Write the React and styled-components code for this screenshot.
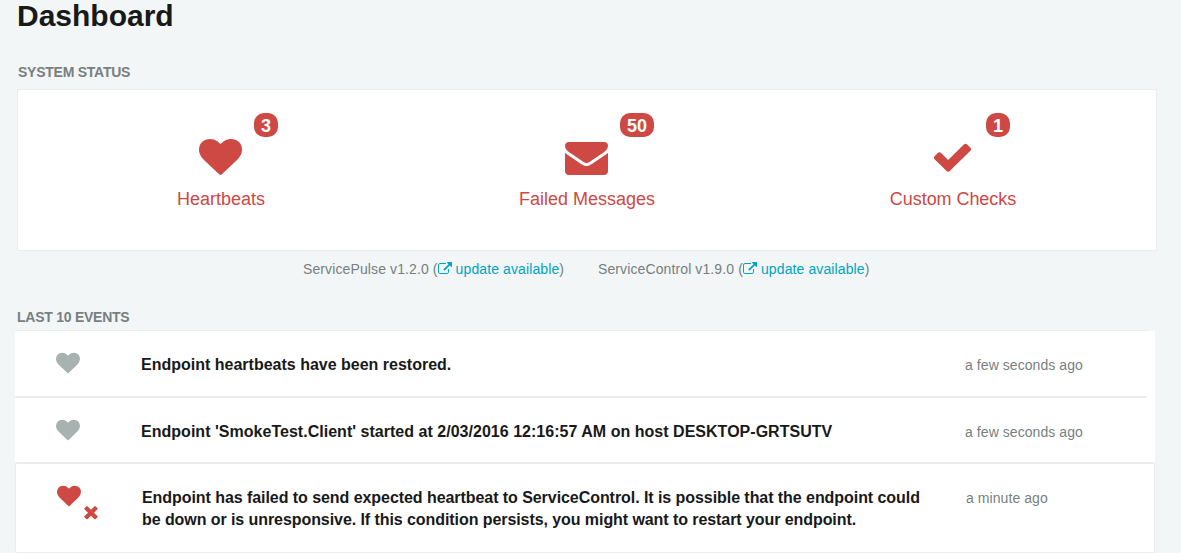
import React from 'react';
import styled, { createGlobalStyle } from 'styled-components';

const red = '#ce4844';
const grey = '#777f7f';

const GlobalStyle = createGlobalStyle`
  *, *::before, *::after { box-sizing: border-box; }
  body {
    margin: 0;
    background: #f2f6f7;
    color: #181919;
    font-family: Arial, "Liberation Sans", sans-serif;
    font-size: 14px;
    overflow: hidden;
  }
`;

const Page = styled.main`
  width: 1181px;
  height: 553px;
  overflow: hidden;
  padding: 0 24px 0 15px;
`;

const Title = styled.h1`
  margin: 0;
  padding-left: 2px;
  height: 32px;
  font-size: 30px;
  line-height: 32px;
`;

const SectionTitle = styled.h6`
  margin: ${(p) => p.$top}px 0 0;
  padding-left: ${(p) => p.$indent}px;
  height: 16px;
  font-size: 14px;
  line-height: 16px;
  letter-spacing: ${(p) => p.$spacing}px;
  color: ${grey};
  text-transform: uppercase;
  white-space: nowrap;
`;

const StatusPanel = styled.section`
  display: grid;
  grid-template-columns: repeat(3, 1fr);
  width: 1140px;
  height: 162px;
  margin: 9px 0 0 2px;
  padding: 0 20px;
  background: #fff;
  border: 1px solid #ebeded;
  border-radius: 2px;
`;

const StatusItem = styled.a`
  display: flex;
  flex-direction: column;
  align-items: center;
  padding-top: 46px;
  color: ${red};
`;

const IconHolder = styled.span`
  position: relative;
  display: block;
  width: 43px;
  height: 42px;
  margin-right: 1px;
`;

const Badge = styled.span`
  position: absolute;
  left: 55px;
  top: -23px;
  height: 24px;
  padding: 0 7px;
  border-radius: 10px;
  background: ${red};
  color: #fff;
  font-size: 18px;
  font-weight: bold;
  line-height: 26px;
`;

const StatusLabel = styled.span`
  margin-top: 10px;
  font-size: 18px;
  line-height: 22px;
  letter-spacing: ${(p) => p.$spacing || 0}px;
  white-space: nowrap;
`;

const Icon = styled.svg`
  display: block;
  flex: none;
  width: ${(p) => p.$width}px;
  height: ${(p) => p.$height}px;
  fill: ${(p) => p.$color || 'currentColor'};
`;

const Versions = styled.div`
  display: flex;
  gap: 34px;
  height: 18px;
  margin: 9px 0 0 288px;
  color: ${grey};
  line-height: 18px;
  letter-spacing: 0.11px;
`;

const Version = styled.span`
  display: flex;
  width: ${(p) => p.$width}px;
  white-space: nowrap;
`;

const UpdateLink = styled.a`
  display: flex;
  align-items: flex-start;
  gap: 4px;
  color: #00a3c4;

  svg { margin-top: 2px; }
`;

const EventList = styled.section`
  display: flex;
  flex-direction: column;
  width: 1140px;
  margin-top: 5px;
`;

const EventRow = styled.article`
  display: grid;
  grid-template-columns: 126px 824px 1fr;
  height: ${(p) => p.$height}px;
  background: #fff;
  border: ${(p) => (p.$boxed ? '1px solid #ebeded' : 'none')};
  border-radius: ${(p) => (p.$boxed ? 2 : 0)}px;
`;

const Divider = styled.div`
  width: ${(p) => p.$width}px;
  height: ${(p) => p.$height}px;
  background: #eceeee;
`;

const DividerTrack = styled.div`
  background: ${(p) => p.$background};
`;

const EventIcon = styled.div`
  position: relative;
  padding: ${(p) => p.$top}px 0 0 41px;
`;

const FailMark = styled.span`
  position: absolute;
  left: 65px;
  top: 38px;
`;

const EventText = styled.p`
  margin: 0;
  padding-top: 23px;
  font-size: 16px;
  font-weight: bold;
  line-height: 22px;
  white-space: nowrap;
`;

const TextLine = styled.span`
  display: block;
  letter-spacing: ${(p) => p.$spacing || 0}px;
`;

const EventTime = styled.time`
  padding-top: 25px;
  color: ${grey};
  line-height: 18px;
  letter-spacing: 0.07px;
  white-space: nowrap;
`;

const paths = {
  heart:
    'M896 1664q-26 0-44-18l-624-602q-10-8-27.5-26t-55.5-65.5-68-97.5-53.5-121-23.5-138q0-220 127-344t351-124q62 0 126.5 21.5t120 58 95.5 68.5 76 68q36-36 76-68t95.5-68.5 120-58 126.5-21.5q224 0 351 124t127 344q0 221-229 450l-623 600q-18 18-44 18z',
  envelope:
    'M1792 710v794q0 66-47 113t-113 47h-1472q-66 0-113-47t-47-113v-794q44 49 101 87 362 246 497 345 57 42 92.5 65.5t94.5 48 110 24.5h2q51 0 110-24.5t94.5-48 92.5-65.5q170-123 498-345 57-39 100-87zm0-294q0 79-49 151t-122 123q-376 261-468 325-10 7-42.5 31t-54 38.5-52 32.5-57.5 27-50 9h-2q-23 0-50-9t-57.5-27-52-32.5-54-38.5-42.5-31q-91-64-262-182.5t-205-142.5q-62-42-117-115.5t-55-136.5q0-78 41.5-130t118.5-52h1472q65 0 112.5 47t47.5 113z',
  check:
    'M1671 566q0 40-28 68l-724 724-136 136q-28 28-68 28t-68-28l-136-136-362-362q-28-28-28-68t28-68l136-136q28-28 68-28t68 28l294 295 656-657q28-28 68-28t68 28l136 136q28 28 28 68z',
  times:
    'M1490 1322q0 40-28 68l-136 136q-28 28-68 28t-68-28l-294-294-294 294q-28 28-68 28t-68-28l-136-136q-28-28-28-68t28-68l294-294-294-294q-28-28-28-68t28-68l136-136q28-28 68-28t68 28l294 294 294-294q28-28 68-28t68 28l136 136q28 28 28 68t-28 68l-294 294 294 294q28 28 28 68z',
  external:
    'M1408 928v320q0 119-84.5 203.5t-203.5 84.5h-832q-119 0-203.5-84.5t-84.5-203.5v-832q0-119 84.5-203.5t203.5-84.5h704q14 0 23 9t9 23v64q0 14-9 23t-23 9h-704q-66 0-113 47t-47 113v832q0 66 47 113t113 47h832q66 0 113-47t47-113v-320q0-14 9-23t23-9h64q14 0 23 9t9 23zm384-864v512q0 26-19 45t-45 19-45-19l-176-176-652 652q-10 10-23 10t-23-10l-114-114q-10-10-10-23t10-23l652-652-176-176q-19-19-19-45t19-45 45-19h512q26 0 45 19t19 45z',
};

function Glyph({ name, width, height = width, color }) {
  return (
    <Icon
      viewBox="0 0 1792 1792"
      preserveAspectRatio="none"
      $width={width}
      $height={height}
      $color={color}
      aria-hidden="true"
    >
      <path d={paths[name]} />
    </Icon>
  );
}

const statuses = [
  { icon: 'heart', count: 3, label: 'Heartbeats' },
  { icon: 'envelope', count: 50, label: 'Failed Messages' },
  { icon: 'check', count: 1, label: 'Custom Checks', spacing: -0.06 },
];

const versions = [
  { name: 'ServicePulse v1.2.0', width: 261 },
  { name: 'ServiceControl v1.9.0', width: 273 },
];

export default function App() {
  return (
    <>
      <GlobalStyle />
      <Page>
        <Title>Dashboard</Title>
        <SectionTitle $top={32} $indent={3} $spacing={-0.25}>System status</SectionTitle>
        <StatusPanel>
          {statuses.map((s) => (
            <StatusItem key={s.label}>
              <IconHolder>
                <Glyph name={s.icon} width={43} height={42} />
                <Badge>{s.count}</Badge>
              </IconHolder>
              <StatusLabel $spacing={s.spacing}>{s.label}</StatusLabel>
            </StatusItem>
          ))}
        </StatusPanel>
        <Versions>
          {versions.map((v) => (
            <Version key={v.name} $width={v.width}>
              {v.name}&nbsp;(
              <UpdateLink>
                <Glyph name="external" width={14} />
                update available
              </UpdateLink>
              )
            </Version>
          ))}
        </Versions>
        <SectionTitle $top={31} $indent={2} $spacing={-0.25}>Last 10 events</SectionTitle>
        <EventList>
          <Divider $width={1132} $height={1} />
          <EventRow $height={65}>
            <EventIcon $top={20}><Glyph name="heart" width={24} color="#a8b3b1" /></EventIcon>
            <EventText><TextLine>Endpoint heartbeats have been restored.</TextLine></EventText>
            <EventTime>a few seconds ago</EventTime>
          </EventRow>
          <DividerTrack $background="#fff"><Divider $width={1132} $height={2} /></DividerTrack>
          <EventRow $height={64}>
            <EventIcon $top={20}><Glyph name="heart" width={24} color="#a8b3b1" /></EventIcon>
            <EventText>
              <TextLine $spacing={0.024}>Endpoint 'SmokeTest.Client' started at 2/03/2016 12:16:57 AM on host DESKTOP-GRTSUTV</TextLine>
            </EventText>
            <EventTime>a few seconds ago</EventTime>
          </EventRow>
          <DividerTrack $background="#f2f4f4"><Divider $width={1140} $height={1} /></DividerTrack>
          <EventRow $height={90} $boxed>
            <EventIcon $top={20}>
              <Glyph name="heart" width={24} color={red} />
              <FailMark><Glyph name="times" width={20} color={red} /></FailMark>
            </EventIcon>
            <EventText>
              <TextLine $spacing={-0.06}>Endpoint has failed to send expected heartbeat to ServiceControl. It is possible that the endpoint could</TextLine>
              <TextLine $spacing={-0.072}>be down or is unresponsive. If this condition persists, you might want to restart your endpoint.</TextLine>
            </EventText>
            <EventTime>a minute ago</EventTime>
          </EventRow>
        </EventList>
      </Page>
    </>
  );
}
